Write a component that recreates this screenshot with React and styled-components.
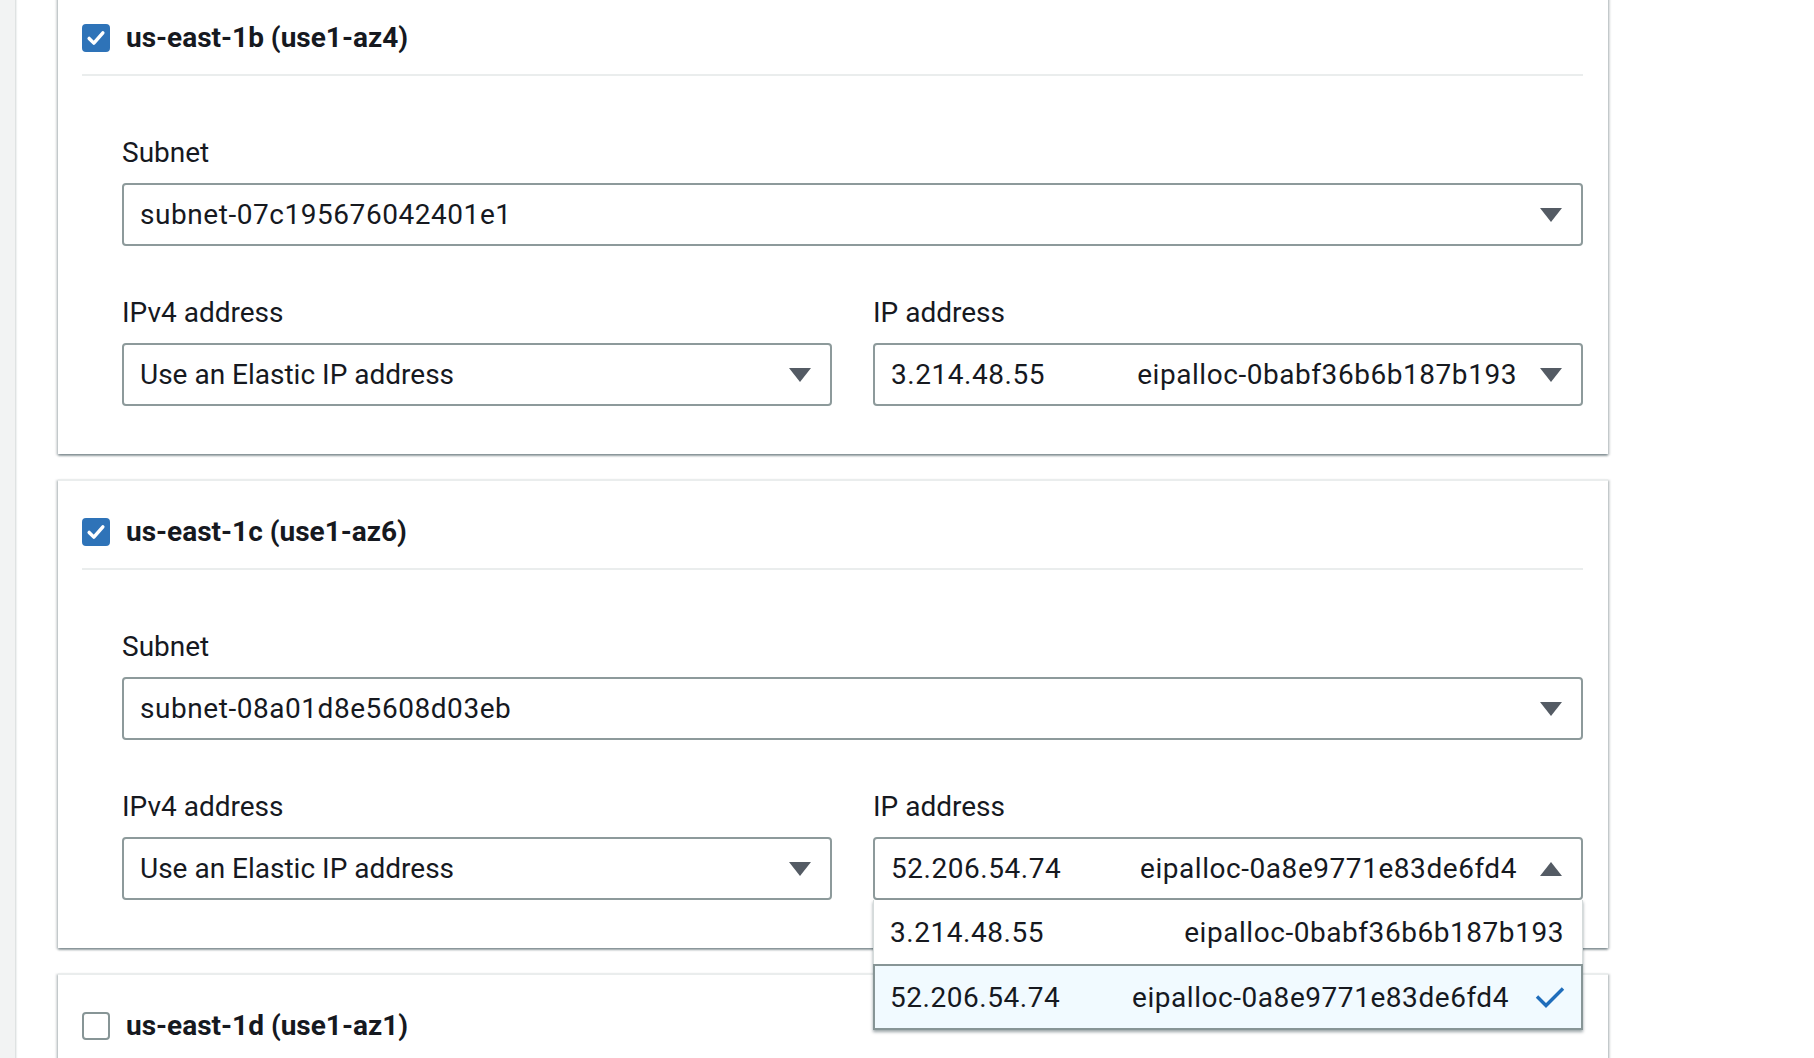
import React from "react";
import styled, { createGlobalStyle } from "styled-components";

const GlobalStyle = createGlobalStyle`
  html, body {
    margin: 0;
    padding: 0;
    background: #ffffff;
    overflow: hidden;
  }
  body {
    font-family: Roboto, "Noto Sans", "Liberation Sans", sans-serif;
    color: #16191f;
  }
`;

const zones = [
  {
    id: "b",
    name: "us-east-1b (use1-az4)",
    checked: true,
    subnet: "subnet-07c195676042401e1",
    ipv4: "Use an Elastic IP address",
    ip: "3.214.48.55",
    alloc: "eipalloc-0babf36b6b187b193",
  },
  {
    id: "c",
    name: "us-east-1c (use1-az6)",
    checked: true,
    open: true,
    subnet: "subnet-08a01d8e5608d03eb",
    ipv4: "Use an Elastic IP address",
    ip: "52.206.54.74",
    alloc: "eipalloc-0a8e9771e83de6fd4",
  },
  {
    id: "d",
    name: "us-east-1d (use1-az1)",
    checked: false,
  },
];

const eips = [
  { ip: "3.214.48.55", alloc: "eipalloc-0babf36b6b187b193" },
  { ip: "52.206.54.74", alloc: "eipalloc-0a8e9771e83de6fd4" },
];

const Caret = ({ up }) => (
  <CaretSvg viewBox="0 0 22 14" $up={up}>
    <polygon points="0,0 22,0 11,14" fill="#545b64" />
  </CaretSvg>
);

const BoxTick = () => (
  <svg width="100%" height="100%" viewBox="0 0 28 28">
    <polyline
      points="6,14.5 11.5,20 22,8"
      fill="none"
      stroke="#ffffff"
      strokeWidth="4"
      strokeLinecap="round"
      strokeLinejoin="round"
    />
  </svg>
);

const OptionTick = () => (
  <TickSvg viewBox="0 0 30 22">
    <polyline
      points="2,10.5 11,19.5 28,2.5"
      fill="none"
      stroke="#1f6dbb"
      strokeWidth="3.4"
      strokeLinejoin="miter"
    />
  </TickSvg>
);

const Select = ({ children, up }) => (
  <SelectBox>
    <SelectValue>{children}</SelectValue>
    <Caret up={up} />
  </SelectBox>
);

const ZoneCard = ({ zone }) => (
  <Card>
    <CardHeader>
      <CheckBox $checked={zone.checked}>{zone.checked && <BoxTick />}</CheckBox>
      <ZoneName>{zone.name}</ZoneName>
    </CardHeader>
    {zone.subnet && (
      <CardBody>
        <Field>
          <Label>Subnet</Label>
          <Select>
            <Data>{zone.subnet}</Data>
          </Select>
        </Field>
        <Columns>
          <Field>
            <Label>IPv4 address</Label>
            <Select>{zone.ipv4}</Select>
          </Field>
          <Field>
            <Label>IP address</Label>
            <SelectAnchor>
              <Select up={zone.open}>
                <IpPair>
                  <Data>{zone.ip}</Data>
                  <Data>{zone.alloc}</Data>
                </IpPair>
              </Select>
              {zone.open && (
                <OptionList>
                  {eips.map((e) => {
                    const selected = e.ip === zone.ip;
                    return (
                      <Option key={e.ip} $selected={selected}>
                        <IpPair>
                          <Data>{e.ip}</Data>
                          <Data>{e.alloc}</Data>
                        </IpPair>
                        {selected && <OptionTick />}
                      </Option>
                    );
                  })}
                </OptionList>
              )}
            </SelectAnchor>
          </Field>
        </Columns>
      </CardBody>
    )}
  </Card>
);

export default function App() {
  return (
    <>
      <GlobalStyle />
      <Page>
        <SideStrip />
        <Content>
          {zones.map((z) => (
            <ZoneCard key={z.id} zone={z} />
          ))}
        </Content>
      </Page>
    </>
  );
}

const Page = styled.div`
  display: flex;
  min-height: 1058px;
  width: 1814px;
`;

const SideStrip = styled.div`
  width: 15px;
  flex-shrink: 0;
  background: #f2f3f3;
  border-right: 1px solid #dfe2e2;
  box-shadow: 1px 0 1px rgba(0, 28, 36, 0.06);
`;

const Content = styled.div`
  display: flex;
  flex-direction: column;
  gap: 25px;
  width: 1550px;
  margin: -15px 0 0 42px;
`;

const Card = styled.div`
  background: #ffffff;
  border-top: 2px solid #eaeded;
  padding: 0 25px 48px 24px;
  box-shadow: 0 2px 2px rgba(0, 28, 36, 0.35), 2px 1px 2px rgba(0, 28, 36, 0.15),
    -2px 1px 2px rgba(0, 28, 36, 0.15);
`;

const CardHeader = styled.div`
  display: flex;
  align-items: center;
  gap: 16px;
  height: 56px;
  padding: 23px 0 8px;
  border-bottom: 2px solid #eaeded;
`;

const CheckBox = styled.div`
  width: 28px;
  height: 28px;
  box-sizing: border-box;
  border-radius: 4px;
  flex-shrink: 0;
  background: ${(p) => (p.$checked ? "#2e73b8" : "#ffffff")};
  border: 2px solid ${(p) => (p.$checked ? "#2e73b8" : "#879596")};
`;

const ZoneName = styled.span`
  font-size: 28px;
  font-weight: 700;
  line-height: 56px;
`;

const CardBody = styled.div`
  display: flex;
  flex-direction: column;
  gap: 47px;
  padding: 57px 0 0 40px;
`;

const Field = styled.div`
  display: flex;
  flex-direction: column;
  gap: 10px;
  min-width: 0;
`;

const Label = styled.label`
  font-size: 28px;
  line-height: 40px;
`;

const Columns = styled.div`
  display: grid;
  grid-template-columns: 1fr 1fr;
  gap: 41px;
`;

const SelectAnchor = styled.div`
  position: relative;
`;

const SelectBox = styled.div`
  display: flex;
  align-items: center;
  gap: 23px;
  height: 63px;
  box-sizing: border-box;
  padding: 0 19px 0 16px;
  border: 2px solid #8d9a9b;
  border-radius: 4px;
  background: #ffffff;
  font-size: 28px;
`;

const SelectValue = styled.div`
  display: flex;
  flex: 1;
  min-width: 0;
  white-space: nowrap;
`;

const Data = styled.span`
  letter-spacing: 0.55px;
`;

const CaretSvg = styled.svg`
  width: 22px;
  height: 14px;
  flex-shrink: 0;
  transform: ${(p) => (p.$up ? "rotate(180deg)" : "none")};
`;

const IpPair = styled.div`
  display: flex;
  justify-content: space-between;
  flex: 1;
  white-space: nowrap;
`;

const OptionList = styled.div`
  position: absolute;
  top: 100%;
  left: 0;
  right: 0;
  z-index: 5;
  background: #ffffff;
  border-left: 1px solid #d5dbdb;
  border-right: 1px solid #d5dbdb;
  box-shadow: 0 2px 3px rgba(0, 28, 36, 0.4);
`;

const Option = styled.div`
  display: flex;
  align-items: center;
  gap: 26px;
  height: ${(p) => (p.$selected ? "66px" : "64px")};
  box-sizing: border-box;
  padding: 0 ${(p) => (p.$selected ? "16px" : "18px")} 0
    ${(p) => (p.$selected ? "15px" : "16px")};
  margin: 0 ${(p) => (p.$selected ? "-1px" : "0")};
  font-size: 28px;
  background: ${(p) => (p.$selected ? "#f1faff" : "#ffffff")};
  border: ${(p) => (p.$selected ? "2px solid #879596" : "none")};
`;

const TickSvg = styled.svg`
  width: 30px;
  height: 22px;
  flex-shrink: 0;
`;
